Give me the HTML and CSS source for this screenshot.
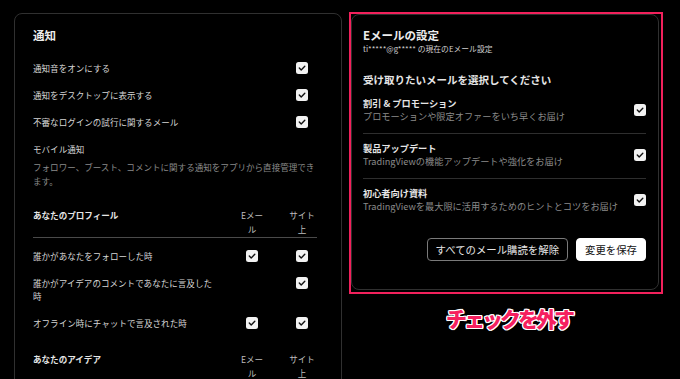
FILE: index.html
```
<!DOCTYPE html>
<html lang="ja">
<head>
<meta charset="utf-8">
<title>通知設定</title>
<link rel="stylesheet" href="styles.css">
</head>
<body>
<svg width="0" height="0" class="defs" aria-hidden="true">
  <symbol id="cb" viewBox="0 0 12 12">
    <rect x="0" y="0" width="12" height="12" rx="2.5" fill="#f2f2f2"/>
    <path d="M3.3 6.1 L5.2 7.9 L8.8 4.3" fill="none" stroke="#111" stroke-width="1.4" stroke-linecap="round" stroke-linejoin="round"/>
  </symbol>
</svg>
<main class="page">
  <section class="card card-notify">
    <h2 class="card-title">通知</h2>
    <ul class="toggle-list">
      <li class="toggle-row"><span class="toggle-label">通知音をオンにする</span><span class="cell"><svg class="check"><use href="#cb"/></svg></span></li>
      <li class="toggle-row"><span class="toggle-label">通知をデスクトップに表示する</span><span class="cell"><svg class="check"><use href="#cb"/></svg></span></li>
      <li class="toggle-row"><span class="toggle-label">不審なログインの試行に関するメール</span><span class="cell"><svg class="check"><use href="#cb"/></svg></span></li>
    </ul>
    <div class="mobile">
      <h3 class="mobile-title">モバイル通知</h3>
      <p class="mobile-desc">フォロワー、ブースト、コメントに関する通知をアプリから直接管理できます。</p>
    </div>
    <div class="matrix">
      <div class="matrix-head">
        <span class="matrix-label">あなたのプロフィール</span>
        <span class="col">Eメー<br>ル</span>
        <span class="col">サイト<br>上</span>
      </div>
      <div class="matrix-body">
        <div class="matrix-row"><span class="row-label">誰かがあなたをフォローした時</span><span class="col"><svg class="check"><use href="#cb"/></svg></span><span class="col"><svg class="check"><use href="#cb"/></svg></span></div>
        <div class="matrix-row"><span class="row-label">誰かがアイデアのコメントであなたに言及した時</span><span class="col"></span><span class="col"><svg class="check"><use href="#cb"/></svg></span></div>
        <div class="matrix-row"><span class="row-label">オフライン時にチャットで言及された時</span><span class="col"><svg class="check"><use href="#cb"/></svg></span><span class="col"><svg class="check"><use href="#cb"/></svg></span></div>
      </div>
    </div>
    <div class="matrix matrix-second">
      <div class="matrix-head">
        <span class="matrix-label">あなたのアイデア</span>
        <span class="col">Eメー<br>ル</span>
        <span class="col">サイト<br>上</span>
      </div>
    </div>
  </section>

  <div class="right-col">
    <div class="highlight">
      <section class="card card-email">
        <h2 class="card-title">Eメールの設定</h2>
        <p class="email-sub">ti*****@g***** の現在のEメール設定</p>
        <h3 class="email-heading">受け取りたいメールを選択してください</h3>
        <ul class="email-list">
          <li class="email-item">
            <div class="email-text">
              <span class="email-label">割引 &amp; プロモーション</span>
              <span class="email-desc">プロモーションや限定オファーをいち早くお届け</span>
            </div>
            <svg class="check"><use href="#cb"/></svg>
          </li>
          <li class="email-item">
            <div class="email-text">
              <span class="email-label">製品アップデート</span>
              <span class="email-desc">TradingViewの機能アップデートや強化をお届け</span>
            </div>
            <svg class="check"><use href="#cb"/></svg>
          </li>
          <li class="email-item">
            <div class="email-text">
              <span class="email-label">初心者向け資料</span>
              <span class="email-desc">TradingViewを最大限に活用するためのヒントとコツをお届け</span>
            </div>
            <svg class="check"><use href="#cb"/></svg>
          </li>
        </ul>
        <div class="actions">
          <button class="btn btn-outline" type="button">すべてのメール購読を解除</button>
          <button class="btn btn-solid" type="button">変更を保存</button>
        </div>
      </section>
    </div>
    <p class="annotation">チェックを外す</p>
  </div>
</main>
</body>
</html>
```

FILE: styles.css
```
html, body {
  margin: 0;
  padding: 0;
  background: #000;
  height: 379px;
  overflow: hidden;
}

body {
  font-family: "Noto Sans CJK JP", "Noto Sans", sans-serif;
  color: #e6e6e6;
}

.defs {
  position: absolute;
  width: 0;
  height: 0;
}

h2, h3, p, ul {
  margin: 0;
  padding: 0;
}

ul {
  list-style: none;
}

.page {
  display: flex;
  align-items: flex-start;
  gap: 7px;
  padding: 12px 0 0 14px;
}

.card {
  background: #000;
  border: 1px solid #303030;
  border-radius: 8px;
  box-sizing: border-box;
}

.check {
  display: block;
  width: 12px;
  height: 12px;
  flex: none;
}

.card-title {
  font-size: 11.5px;
  line-height: 14px;
  font-weight: 700;
  color: #ececec;
}

/* ---------- left card ---------- */
.card-notify {
  width: 328px;
  height: 420px;
  margin-top: 1px;
  padding: 14px 24px 0 18px;
}

.toggle-list {
  margin-top: 12px;
}

.toggle-row {
  display: flex;
  align-items: center;
  height: 27px;
  font-size: 8.55px;
  color: #d6d6d6;
}

.toggle-label {
  flex: 1;
}

.cell {
  width: 30px;
  display: flex;
  justify-content: center;
}

.mobile-title {
  margin-top: 7.5px;
  font-size: 8.55px;
  line-height: 13px;
  font-weight: 400;
  color: #d6d6d6;
}

.mobile-desc {
  margin-top: 4.5px;
  font-size: 8.55px;
  line-height: 14px;
  color: #8a8a8a;
}

.matrix {
  margin-top: 20px;
}

.matrix-second {
  margin-top: 15.5px;
}

.matrix-head {
  display: flex;
  gap: 20px;
  padding-bottom: 1px;
  border-bottom: 1px solid #4a4a4a;
  font-size: 8.55px;
  line-height: 14px;
}

.matrix-label {
  flex: 1;
  font-weight: 700;
  color: #e6e6e6;
}

.col {
  width: 30px;
  flex: none;
  text-align: center;
  color: #bdbdbd;
  display: flex;
  flex-direction: column;
  align-items: center;
}

.matrix-row .col {
  height: 13px;
  justify-content: center;
}

.matrix-body {
  padding-top: 4.5px;
}

.matrix-row {
  display: flex;
  align-items: flex-start;
  gap: 20px;
  padding: 7px 0;
  font-size: 8.55px;
  line-height: 13px;
  color: #d6d6d6;
}

.row-label {
  flex: 1;
}

/* ---------- right card ---------- */
.right-col {
  display: flex;
  flex-direction: column;
  align-items: center;
  width: 314px;
}

.highlight {
  box-sizing: border-box;
  width: 314px;
  border: 2px solid #f2215c;
  padding: 0 2px 2px 0;
}

.card-email {
  padding: 13px 12px 28px 11px;
}

.email-sub {
  margin-top: 2px;
  font-size: 7.8px;
  line-height: 10px;
  color: #cfcfcf;
}

.email-heading {
  margin-top: 19px;
  font-size: 10.5px;
  line-height: 14px;
  font-weight: 700;
  color: #e6e6e6;
}

.email-list {
  margin-top: 1.5px;
}

.email-item {
  display: flex;
  align-items: center;
  justify-content: space-between;
  padding: 8.5px 0 9.5px;
  border-bottom: 1px solid #2e2e2e;
}

.email-item:last-child {
  border-bottom: none;
}

.email-text {
  display: flex;
  flex-direction: column;
}

.email-label {
  font-size: 9.2px;
  line-height: 13px;
  font-weight: 700;
  color: #e6e6e6;
}

.email-desc {
  font-size: 9.2px;
  line-height: 13px;
  color: #8a8a8a;
}

.actions {
  display: flex;
  justify-content: flex-end;
  gap: 8px;
  margin-top: 15.5px;
}

.btn {
  font-family: inherit;
  font-size: 10.4px;
  line-height: 13px;
  height: 23px;
  padding: 0 8px;
  border-radius: 4px;
  box-sizing: border-box;
  cursor: pointer;
}

.btn-outline {
  background: transparent;
  color: #e6e6e6;
  border: 1px solid #7a7a7a;
}

.btn-solid {
  background: #fff;
  color: #111;
  border: 1px solid #fff;
}

.annotation {
  margin-top: 11px;
  margin-left: 6px;
  font-size: 21px;
  line-height: 26px;
  font-weight: 900;
  letter-spacing: -3px;
  color: #f5205f;
  text-shadow:
    1.2px 0 0 #fff, -1.2px 0 0 #fff, 0 1.2px 0 #fff, 0 -1.2px 0 #fff,
    0.9px 0.9px 0 #fff, -0.9px 0.9px 0 #fff, 0.9px -0.9px 0 #fff, -0.9px -0.9px 0 #fff;
}
```
